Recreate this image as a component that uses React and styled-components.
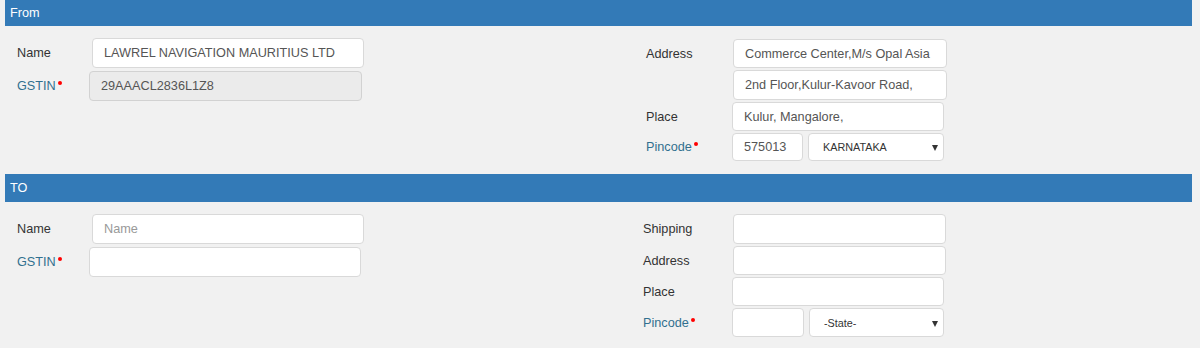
import React from "react";
import styled, { createGlobalStyle } from "styled-components";

const Global = createGlobalStyle`
  html, body { margin: 0; padding: 0; background: #f1f1f1; }
  body { font-family: "Liberation Sans", Arial, sans-serif; font-size: 12.7px; color: #333; }
  * { box-sizing: border-box; }
`;

const Page = styled.div`
  width: 1200px;
  height: 348px;
  overflow: hidden;
  padding-left: 5px;
`;

const Section = styled.section`
  width: 1187px;
`;

const Header = styled.div`
  height: ${(p) => p.$h}px;
  background: #337ab7;
  color: #fff;
  padding-left: 5px;
  display: flex;
  align-items: center;
  font-size: 12.7px;
`;

const Body = styled.div`
  height: ${(p) => p.$h}px;
  display: flex;
`;

const LeftCol = styled.div`
  width: 595px;
  padding-left: 12px;
  padding-top: ${(p) => p.$top}px;
  display: flex;
  flex-direction: column;
  gap: 3px;
`;

const RightCol = styled.div`
  flex: 1;
  padding-left: ${(p) => p.$pl}px;
  padding-top: ${(p) => p.$top}px;
  display: flex;
  flex-direction: column;
`;

const Row = styled.div`
  display: flex;
  align-items: center;
  height: ${(p) => p.$h}px;
  margin-top: ${(p) => p.$mt || 0}px;
`;

const Label = styled.label`
  width: ${(p) => p.$w}px;
  flex-shrink: 0;
  color: ${(p) => (p.$info ? "#31708f" : "#333")};
  font-size: 12.7px;
  display: flex;
  align-items: flex-start;
  padding-top: ${(p) => p.$dy || 0}px;
`;

const Req = styled.span`
  width: 4px;
  height: 4px;
  border-radius: 50%;
  background: #f00;
  margin-left: 2px;
  margin-top: 2px;
`;

const Input = styled.input`
  width: ${(p) => p.$w}px;
  height: 100%;
  margin-left: ${(p) => p.$ml || 0}px;
  background: ${(p) => (p.disabled ? "#ebebeb" : "#fff")};
  border: 1px solid ${(p) => (p.disabled ? "#d2d2d2" : "#d9d9d9")};
  border-radius: 4px;
  padding: 0 11px;
  font-family: "Liberation Sans", Arial, sans-serif;
  font-size: 12.7px;
  color: #555;
  outline: none;
  &::placeholder { color: #999; }
`;

const SelectWrap = styled.div`
  position: relative;
  width: ${(p) => p.$w}px;
  height: 100%;
  margin-left: ${(p) => p.$ml}px;
`;

const Select = styled.select`
  appearance: none;
  -webkit-appearance: none;
  width: 100%;
  height: 100%;
  background: #fff;
  border: 1px solid #d9d9d9;
  border-radius: 4px;
  padding: 0 0 0 14px;
  font-family: "Liberation Sans", Arial, sans-serif;
  font-size: 10.8px;
  color: #333;
  outline: none;
`;

const Arrow = styled.span`
  position: absolute;
  right: 6px;
  top: 50%;
  margin-top: -2px;
  width: 0;
  height: 0;
  border-left: 3.5px solid transparent;
  border-right: 3.5px solid transparent;
  border-top: 6px solid #333;
  pointer-events: none;
`;

function Field({ label, info, req, lw, h, mt, children, dy }) {
  return (
    <Row $h={h} $mt={mt}>
      <Label $w={lw} $info={info} $dy={dy}>
        {label}
        {req && <Req />}
      </Label>
      {children}
    </Row>
  );
}

function StateSelect({ value, ml, w }) {
  return (
    <SelectWrap $ml={ml} $w={w}>
      <Select defaultValue={value}>
        <option value={value}>{value}</option>
      </Select>
      <Arrow />
    </SelectWrap>
  );
}

export default function App() {
  return (
    <Page>
      <Global />
      <Section>
        <Header $h={26}>From</Header>
        <Body $h={148}>
          <LeftCol $top={12}>
            <Field label="Name" lw={75} h={30}>
              <Input $w={272} defaultValue="LAWREL NAVIGATION MAURITIUS LTD" />
            </Field>
            <Field label="GSTIN" info req lw={72} h={30}>
              <Input $w={273} disabled defaultValue="29AAACL2836L1Z8" />
            </Field>
          </LeftCol>
          <RightCol $pl={46} $top={13}>
            <Field label="Address" lw={87} h={29} dy={0}>
              <Input $w={214} defaultValue="Commerce Center,M/s Opal Asia" />
            </Field>
            <Field label="" lw={87} h={30} mt={2}>
              <Input $w={214} defaultValue="2nd Floor,Kulur-Kavoor Road," />
            </Field>
            <Field label="Place" lw={86} h={29} mt={2}>
              <Input $w={212} defaultValue="Kulur, Mangalore," />
            </Field>
            <Field label="Pincode" info req lw={86} h={28} mt={2}>
              <Input $w={71} defaultValue="575013" />
              <StateSelect value="KARNATAKA" ml={5} w={136} />
            </Field>
          </RightCol>
        </Body>
      </Section>
      <Section>
        <Header $h={28}>TO</Header>
        <Body $h={146}>
          <LeftCol $top={12}>
            <Field label="Name" lw={75} h={30}>
              <Input $w={272} placeholder="Name" />
            </Field>
            <Field label="GSTIN" info req lw={72} h={30}>
              <Input $w={272} />
            </Field>
          </LeftCol>
          <RightCol $pl={43} $top={12}>
            <Field label="Shipping" lw={90} h={30}>
              <Input $w={213} />
            </Field>
            <Field label="Address" lw={90} h={29} mt={2}>
              <Input $w={213} />
            </Field>
            <Field label="Place" lw={89} h={29} mt={2}>
              <Input $w={212} />
            </Field>
            <Field label="Pincode" info req lw={89} h={29} mt={2}>
              <Input $w={72} />
              <StateSelect value="-State-" ml={5} w={135} />
            </Field>
          </RightCol>
        </Body>
      </Section>
    </Page>
  );
}
